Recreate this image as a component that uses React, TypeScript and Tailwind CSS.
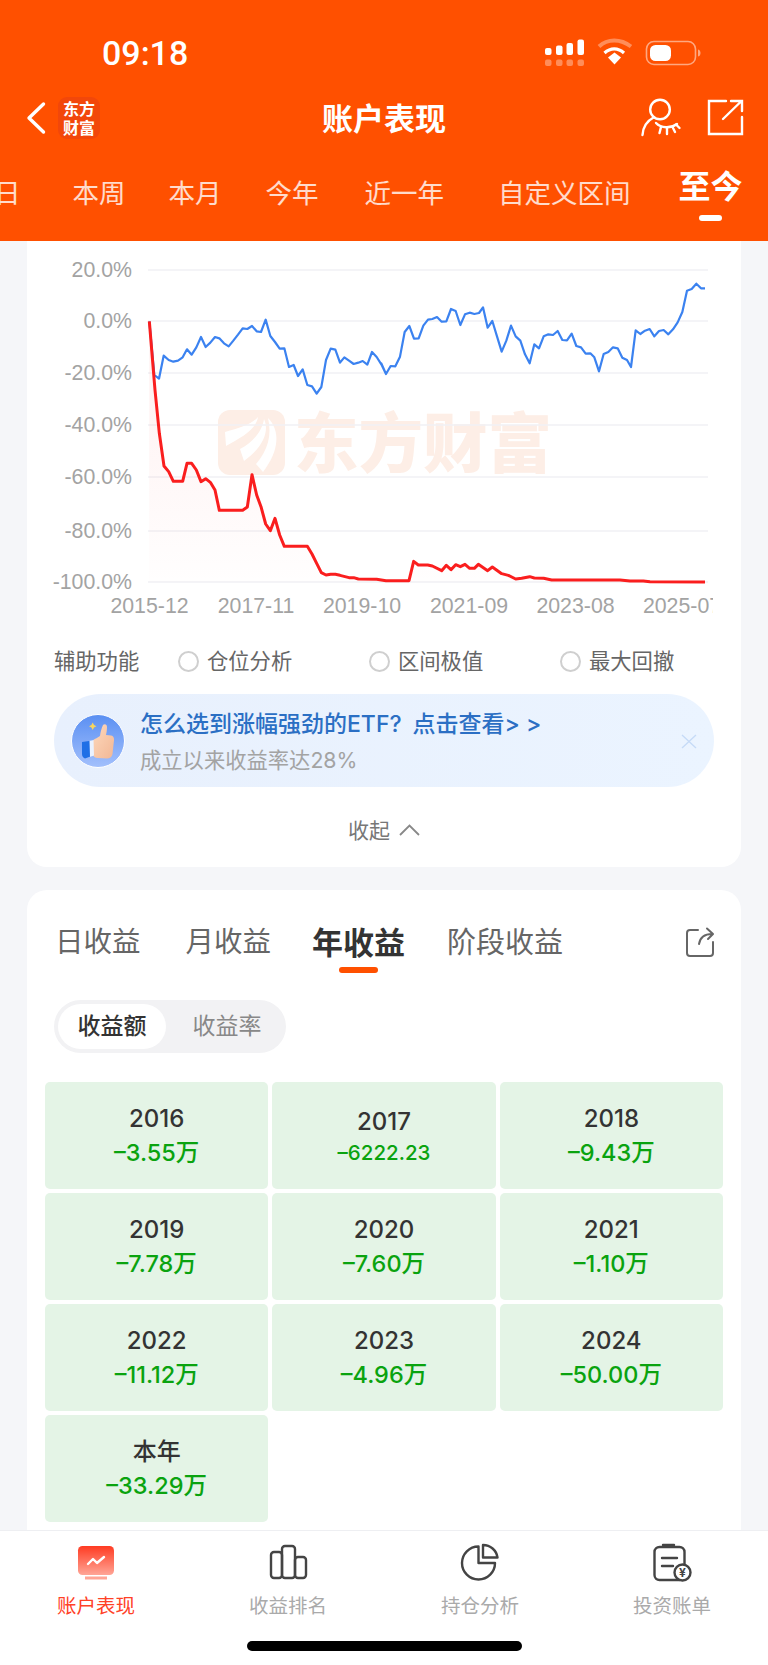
import React from "react";

type Pt = [number, number];

// traced from the reference, in crop coordinates (3x, two crops split at x=390)
const blueLeft: Pt[] = [[358,214],[373,375],[387,386],[401,317],[416,330],[430,335],[444,332],[458,322],[471,298],[485,314],[499,292],[513,261],[527,291],[541,278],[555,261],[568,265],[582,280],[596,289],[610,272],[624,254],[638,235],[652,237],[666,228],[680,244],[693,246],[707,209],[721,258],[735,276],[749,296],[763,295],[777,351],[791,345],[804,378],[818,358],[832,405],[846,409],[860,431],[874,411],[888,330],[902,296],[916,299],[930,338],[943,322],[957,332],[971,342],[985,338],[998,333],[1012,344],[1026,306],[1040,321],[1054,343],[1068,372]];
const blueRight: Pt[] = [[4,340],[18,372],[32,348],[46,349],[60,320],[74,246],[88,228],[102,266],[116,265],[130,227],[144,209],[157,207],[171,201],[185,215],[199,214],[213,177],[227,183],[241,225],[255,193],[269,188],[283,192],[297,189],[309,172],[323,233],[337,213],[351,259],[365,305],[379,272],[393,227],[407,259],[421,272],[435,313],[449,340],[463,283],[477,295],[491,259],[505,253],[519,255],[533,243],[547,270],[561,271],[575,251],[589,288],[603,292],[617,311],[631,310],[643,322],[657,364],[671,312],[685,306],[699,292],[713,295],[727,323],[741,330],[753,351],[767,241],[781,252],[795,242],[809,237],[823,259],[837,243],[851,240],[865,253],[879,238],[893,217],[907,186],[921,122],[935,117],[949,101],[963,115],[975,115]];
const redLeft: Pt[] = [[358,214],[375,420],[388,550],[402,648],[416,665],[430,694],[444,694],[458,694],[471,640],[485,640],[499,660],[513,695],[527,686],[541,697],[555,720],[568,781],[582,781],[638,781],[652,771],[666,674],[680,735],[693,770],[707,822],[721,842],[735,805],[749,855],[763,889],[777,889],[832,889],[846,912],[860,940],[874,968],[888,975],[902,973],[916,973],[930,976],[957,983],[971,983],[985,987],[1040,988],[1068,992]];
const redRight: Pt[] = [[18,992],[87,992],[101,934],[115,945],[143,945],[157,948],[185,962],[199,946],[213,959],[227,944],[241,950],[255,943],[269,955],[283,955],[295,943],[323,962],[337,951],[365,971],[385,976],[407,987],[425,985],[449,980],[463,984],[491,985],[515,990],[720,990],[750,993],[790,993],[810,995],[975,996]];

const toPage = (pts: Pt[], ox: number) => pts.map(([x, y]) => `${ox + x / 3},${250 + y / 3}`).join(" ");
const bluePts = `${toPage(blueLeft, 30)} ${toPage(blueRight, 380)}`;
const redPts = `${toPage(redLeft, 30)} ${toPage(redRight, 380)}`;

const gridLines = [
  { y: 270, label: "20.0%" },
  { y: 321, label: "0.0%" },
  { y: 373, label: "-20.0%" },
  { y: 425, label: "-40.0%" },
  { y: 477, label: "-60.0%" },
  { y: 531, label: "-80.0%" },
  { y: 582, label: "-100.0%" },
];

const xLabels = [
  { x: 149.5, label: "2015-12" },
  { x: 256, label: "2017-11" },
  { x: 362, label: "2019-10" },
  { x: 469, label: "2021-09" },
  { x: 575.5, label: "2023-08" },
  { x: 682, label: "2025-07" },
];

const years = [
  { year: "2016", value: "–3.55万", small: false },
  { year: "2017", value: "–6222.23", small: true },
  { year: "2018", value: "–9.43万", small: false },
  { year: "2019", value: "–7.78万", small: false },
  { year: "2020", value: "–7.60万", small: false },
  { year: "2021", value: "–1.10万", small: false },
  { year: "2022", value: "–11.12万", small: false },
  { year: "2023", value: "–4.96万", small: false },
  { year: "2024", value: "–50.00万", small: false },
  { year: "本年", value: "–33.29万", small: false },
];

function Chart() {
  return (
    <svg width="686" height="384" viewBox="27 241 686 384" className="block font-['Liberation_Sans',sans-serif]">
      <defs>
        <linearGradient id="redArea" x1="0" y1="0" x2="0" y2="1">
          <stop offset="0" stopColor="#fa1e1e" stopOpacity="0.07" />
          <stop offset="1" stopColor="#fa1e1e" stopOpacity="0.005" />
        </linearGradient>
      </defs>
      <rect x="218" y="410" width="67" height="65" rx="12" fill="#fdeee6" />
      <path d="M225 432C240 428 252 424 258 417C256 430 240 438 226 446Z" fill="#fff" />
      <path d="M240 449C252 443 262 432 264 419C270 432 262 448 244 461Z" fill="#fff" />
      <path d="M256 464C268 450 272 435 268 418C280 430 280 450 263 472Z" fill="#fff" />
      <text x="294" y="467" fontSize="64.5" fontWeight="900" fill="#fdeee6" className="font-['Noto_Sans_CJK_SC',sans-serif]">东方财富</text>
      {gridLines.map((g) => (
        <g key={g.label}>
          <line x1="148" x2="708" y1={g.y} y2={g.y} stroke="#f0f1f5" strokeWidth="1.5" />
          <text x="132" y={g.y + 7} textAnchor="end" fontSize="21.3" fill="#a3a3a3">{g.label}</text>
        </g>
      ))}
      {xLabels.map((l) => (
        <text key={l.label} x={l.x} y="613" textAnchor="middle" fontSize="21.3" fill="#a3a3a3">{l.label}</text>
      ))}
      <polygon points={`${redPts} 705,582 149,582`} fill="url(#redArea)" />
      <polyline points={bluePts} fill="none" stroke="#3b82f0" strokeWidth="2.2" strokeLinejoin="round" />
      <polyline points={redPts} fill="none" stroke="#fa1e1e" strokeWidth="3" strokeLinejoin="round" />
    </svg>
  );
}

function Header() {
  return (
    <div className="h-[241px] shrink-0 bg-[#ff5000] text-white overflow-hidden">
      <div className="h-[80px] pt-[25px] flex items-center">
        <span className="ml-[102px] text-[34px] font-medium font-['Roboto',sans-serif] leading-none">09:18</span>
        <svg width="165" height="36" viewBox="540 34 165 36" className="ml-auto mr-[63px]">
          <g fill="#fff">
            <rect x="545" y="47" width="6.5" height="7" rx="2" />
            <rect x="556" y="44.5" width="6.5" height="9.5" rx="2" />
            <rect x="566.5" y="42" width="6.5" height="12" rx="2" />
            <rect x="577.5" y="38.5" width="6.5" height="15.5" rx="2" />
          </g>
          <g fill="#fff" opacity="0.35">
            <rect x="545" y="58.5" width="6.5" height="6.5" rx="2" />
            <rect x="556" y="58.5" width="6.5" height="6.5" rx="2" />
            <rect x="566.5" y="58.5" width="6.5" height="6.5" rx="2" />
            <rect x="577.5" y="58.5" width="6.5" height="6.5" rx="2" />
          </g>
          <path d="M599 45.5C607.5 37.5 620.5 37.5 631 45.5" fill="none" stroke="#fff" strokeOpacity="0.35" strokeWidth="4" />
          <path d="M604.5 52C610.5 46.5 618 46.5 624 52" fill="none" stroke="#fff" strokeWidth="3.2" />
          <path d="M608 56.5L614.5 51.5L621 56.5L614.5 63.5Z" fill="#fff" />
          <rect x="646.5" y="40.5" width="49" height="23" rx="7.5" fill="none" stroke="#fff" strokeOpacity="0.5" strokeWidth="1.6" />
          <rect x="650" y="44" width="21" height="16" rx="5.5" fill="#fff" />
          <path d="M698 48.5C700 49 700.5 50.5 700.5 52C700.5 53.5 700 55 698 55.5Z" fill="#fff" fillOpacity="0.5" />
        </svg>
      </div>
      <div className="h-[76px] flex items-center">
        <div className="flex-1 flex items-center pl-[26px]">
          <svg width="20" height="34" viewBox="0 0 20 34" fill="none">
            <path d="M17.5 3L3 17L17.5 31" stroke="#fff" strokeWidth="3.4" strokeLinecap="round" strokeLinejoin="round" />
          </svg>
          <div className="ml-[12px] w-[42px] h-[42px] rounded-[9px] bg-[#f2470a] flex flex-col items-center justify-center text-[16px] font-bold leading-[19px] font-['Noto_Sans_CJK_SC',sans-serif]">
            <span>东方</span>
            <span>财富</span>
          </div>
        </div>
        <span className="mr-[6px] text-[31px] font-semibold leading-none">账户表现</span>
        <div className="flex-1 flex items-center justify-end pr-[20px]">
          <svg width="44" height="42" viewBox="640 98 44 42" fill="none" stroke="#fff" strokeWidth="2.4" strokeLinecap="round">
            <circle cx="661" cy="110.5" r="9.8" />
            <path d="M643.5 136C644 128 648 122 654.5 118.5" />
            <path d="M657 124C662 129.5 672 129.5 678 125" />
            <path d="M662 128L660.5 134M668 129L668 135M673.5 128L676 133M677 125.5L680.5 129" />
          </svg>
          <svg width="44" height="42" viewBox="705 98 44 42" fill="none" stroke="#fff" strokeWidth="2.4" strokeLinecap="round" className="ml-[21px]">
            <path d="M727 102H710V135H743V118" />
            <path d="M724 120L742 102.5M732 102H743V112" />
          </svg>
        </div>
      </div>
      <div className="h-[85px] flex items-start text-[26.5px] leading-none text-white/80 -ml-[6px]">
        <div className="h-[74px] flex items-center">日</div>
        <div className="h-[74px] flex items-center ml-[52px]">本周</div>
        <div className="h-[74px] flex items-center ml-[43px]">本月</div>
        <div className="h-[74px] flex items-center ml-[44px]">今年</div>
        <div className="h-[74px] flex items-center ml-[46px]">近一年</div>
        <div className="h-[74px] flex items-center ml-[54px]">自定义区间</div>
        <div className="relative h-[62px] flex items-center ml-[48px] text-[32px] font-bold text-white">
          至今
          <span className="absolute top-[59px] left-[20px] w-[23px] h-[6px] rounded-full bg-white" />
        </div>
      </div>
    </div>
  );
}

function Radio({ label }: { label: string }) {
  return (
    <div className="w-[191px] flex items-center gap-[8px] shrink-0">
      <span className="w-[21px] h-[21px] rounded-full border-2 border-[#cfcfcf]" />
      <span>{label}</span>
    </div>
  );
}

function ThumbAvatar() {
  return (
    <svg width="54" height="54" viewBox="0 0 54 54" className="ml-[17px] shrink-0">
      <defs>
        <linearGradient id="avatarBg" x1="0" y1="0" x2="0" y2="1">
          <stop offset="0" stopColor="#5a8ff2" />
          <stop offset="1" stopColor="#a3c0fc" />
        </linearGradient>
        <linearGradient id="thumbSkin" x1="0" y1="0" x2="1" y2="1">
          <stop offset="0" stopColor="#fdd9bd" />
          <stop offset="1" stopColor="#f2b795" />
        </linearGradient>
      </defs>
      <circle cx="27" cy="27" r="26.5" fill="url(#avatarBg)" stroke="#fff" />
      <path d="M21.7 8.5L23 11L25.5 12.2L23 13.4L21.7 16L20.4 13.4L18 12.2L20.4 11Z" fill="#f9d65c" />
      <path d="M29 22C29.5 18 30.5 14 32 11C33.5 9.5 36 10 36 13C36 16 35.5 19 35 21L40 21.5C43 22 43.5 25 42.8 28L41.5 40C41 43 38.5 44.5 36 44.5L27 44C24 44 22 42.5 22 40L22 27C22 25 26 24.5 29 22Z" fill="url(#thumbSkin)" />
      <path d="M11 28L18 27L22 26.5L22 41.5L14 44.5C12 44 11 42 11 40Z" fill="#1f6fe6" />
      <path d="M18.5 26.8L22.5 26L23 41.5L19 43Z" fill="#eaf2ff" />
    </svg>
  );
}

function ChartCard() {
  return (
    <div className="h-[626px] shrink-0 bg-white rounded-b-[20px]">
      <Chart />
      <div className="mt-[22px] h-[30px] pl-[27px] flex items-center text-[21.3px] leading-none text-[#666666]">
        <span className="w-[124px] shrink-0">辅助功能</span>
        <Radio label="仓位分析" />
        <Radio label="区间极值" />
        <Radio label="最大回撤" />
      </div>
      <div className="relative mt-[17px] mx-[27px] h-[93px] rounded-full bg-gradient-to-r from-[#e8f0fd] to-[#ebf4ff] flex items-center">
        <ThumbAvatar />
        <div className="ml-[15px] mt-[3px] flex flex-col">
          <span className="text-[23px] leading-[28px] font-medium text-[#2b6fc4]">
            怎么选到涨幅强劲的ETF?
            <span className="ml-[11px]">点击查看&gt; &gt;</span>
          </span>
          <span className="mt-[8px] text-[21.3px] leading-[28px] text-[#a3a3a3]">成立以来收益率达28%</span>
        </div>
        <svg width="16" height="15" viewBox="0 0 16 15" fill="none" stroke="#c6dbf7" strokeWidth="1.4" className="absolute right-[17px] top-[40px]">
          <path d="M1 1L15 14M15 1L1 14" />
        </svg>
      </div>
      <div className="mt-[28px] h-[30px] flex items-center justify-center gap-[9px] text-[21px] leading-none text-[#777777]">
        <span>收起</span>
        <svg width="21" height="12" viewBox="0 0 21 12" fill="none" stroke="#888888" strokeWidth="1.8">
          <path d="M1 11L10.5 1.5L20 11" />
        </svg>
      </div>
    </div>
  );
}

function EarningsCard() {
  return (
    <div className="mt-[23px] flex-1 bg-white rounded-t-[20px]">
      <div className="pt-[27px] h-[77px] pl-[28px] pr-[26px] flex items-center text-[28.5px] leading-none text-[#666666]">
        <span>日收益</span>
        <span className="ml-[45px]">月收益</span>
        <span className="relative ml-[41px] text-[31px] font-bold text-[#333333]">
          年收益
          <span className="absolute left-[27px] top-[40px] w-[39px] h-[6px] rounded-full bg-[#ff5000]" />
        </span>
        <span className="ml-[42px] text-[29px]">阶段收益</span>
        <svg width="30" height="30" viewBox="0 0 30 30" fill="none" stroke="#666666" strokeWidth="2" strokeLinecap="round" strokeLinejoin="round" className="ml-auto">
          <path d="M13 3H5C3 3 2 4 2 6V26C2 28 3 29 5 29H25C27 29 28 28 28 26V15" />
          <path d="M14 17C15 11 19 7 27 7M22 1.5L28 7L23 12" />
        </svg>
      </div>
      <div className="mt-[33px] ml-[27px] w-[232px] h-[53px] p-[4px] rounded-full bg-[#f2f2f4] flex items-center text-[23px] leading-none">
        <span className="w-[108px] h-[45px] rounded-full bg-white flex items-center justify-center font-medium text-[#333333]">收益额</span>
        <span className="flex-1 pl-[6px] text-center text-[#888888]">收益率</span>
      </div>
      <div className="mt-[29px] mx-[18px] grid grid-cols-3 gap-[4px]">
        {years.map((c) => (
          <div key={c.year} className="h-[107px] rounded-[5px] bg-[#e4f4e6] flex flex-col items-center justify-center">
            <span className={c.small ? "h-[34px] leading-[34px] text-[24px] font-medium text-[#333333] translate-y-[3px]" : "h-[34px] leading-[34px] text-[24px] font-medium text-[#333333]"}>{c.year}</span>
            <span className={c.small ? "h-[34px] leading-[34px] text-[20.5px] font-medium text-[#0aa30f]" : "h-[34px] leading-[34px] text-[23.5px] font-medium text-[#0aa30f]"}>{c.value}</span>
          </div>
        ))}
      </div>
    </div>
  );
}

function BottomNav() {
  return (
    <div className="h-[135px] shrink-0 bg-white border-t border-[#eeeff2] relative z-10">
      <div className="grid grid-cols-4 pt-[12px]">
        <div className="flex flex-col items-center">
          <svg width="40" height="40" viewBox="76 1543 40 40">
            <defs>
              <linearGradient id="navActive" x1="0" y1="0" x2="0" y2="1">
                <stop offset="0" stopColor="#ff3b22" />
                <stop offset="1" stopColor="#ffa596" />
              </linearGradient>
            </defs>
            <rect x="78" y="1546" width="36" height="29" rx="4.5" fill="url(#navActive)" />
            <rect x="85" y="1576.5" width="22" height="3" fill="#ffa596" />
            <path d="M88 1564L93 1559L97 1563L104 1557" fill="none" stroke="#fff" strokeWidth="2.4" strokeLinecap="round" strokeLinejoin="round" />
          </svg>
          <span className="mt-[10px] h-[26px] leading-[26px] text-[19.5px] text-[#ff4126]">账户表现</span>
        </div>
        <div className="flex flex-col items-center">
          <svg width="40" height="40" viewBox="268 1543 40 40" fill="none" stroke="#444444" strokeWidth="2.4" strokeLinejoin="round">
            <rect x="271" y="1552" width="11" height="26" rx="3" />
            <rect x="282" y="1546" width="13" height="32" rx="3" />
            <rect x="295" y="1557" width="11" height="21" rx="3" />
          </svg>
          <span className="mt-[10px] h-[26px] leading-[26px] text-[19.5px] text-[#aaaaaa]">收益排名</span>
        </div>
        <div className="flex flex-col items-center">
          <svg width="40" height="40" viewBox="460 1543 40 40" fill="none" stroke="#444444" strokeWidth="2.4" strokeLinejoin="round">
            <path d="M478.5 1546.5A16.5 16.5 0 1 0 495 1563H478.5Z" />
            <path d="M483 1545V1557.5H497.5A14.5 14.5 0 0 0 483 1545Z" />
          </svg>
          <span className="mt-[10px] h-[26px] leading-[26px] text-[19.5px] text-[#aaaaaa]">持仓分析</span>
        </div>
        <div className="flex flex-col items-center">
          <svg width="40" height="40" viewBox="652 1543 40 40" fill="none" stroke="#444444" strokeWidth="2.4" strokeLinecap="round">
            <rect x="654.5" y="1547" width="30" height="33" rx="5" />
            <path d="M663 1545H674" />
            <path d="M662 1558H677M662 1566H673" />
            <circle cx="682.5" cy="1572.5" r="8" fill="#fff" />
            <text x="682.5" y="1577" textAnchor="middle" fontSize="12" fontWeight="700" fill="#444444" stroke="none">¥</text>
          </svg>
          <span className="mt-[10px] h-[26px] leading-[26px] text-[19.5px] text-[#aaaaaa]">投资账单</span>
        </div>
      </div>
      <div className="mt-[22px] mx-auto w-[275px] h-[10px] rounded-full bg-black" />
    </div>
  );
}

export default function App() {
  return (
    <div className="w-[768px] h-[1665px] overflow-hidden flex flex-col bg-[#f5f6f9] font-['Inter','Noto_Sans_CJK_SC',sans-serif]">
      <Header />
      <div className="flex-1 min-h-0 overflow-hidden px-[27px] flex flex-col">
        <ChartCard />
        <EarningsCard />
      </div>
      <BottomNav />
    </div>
  );
}
